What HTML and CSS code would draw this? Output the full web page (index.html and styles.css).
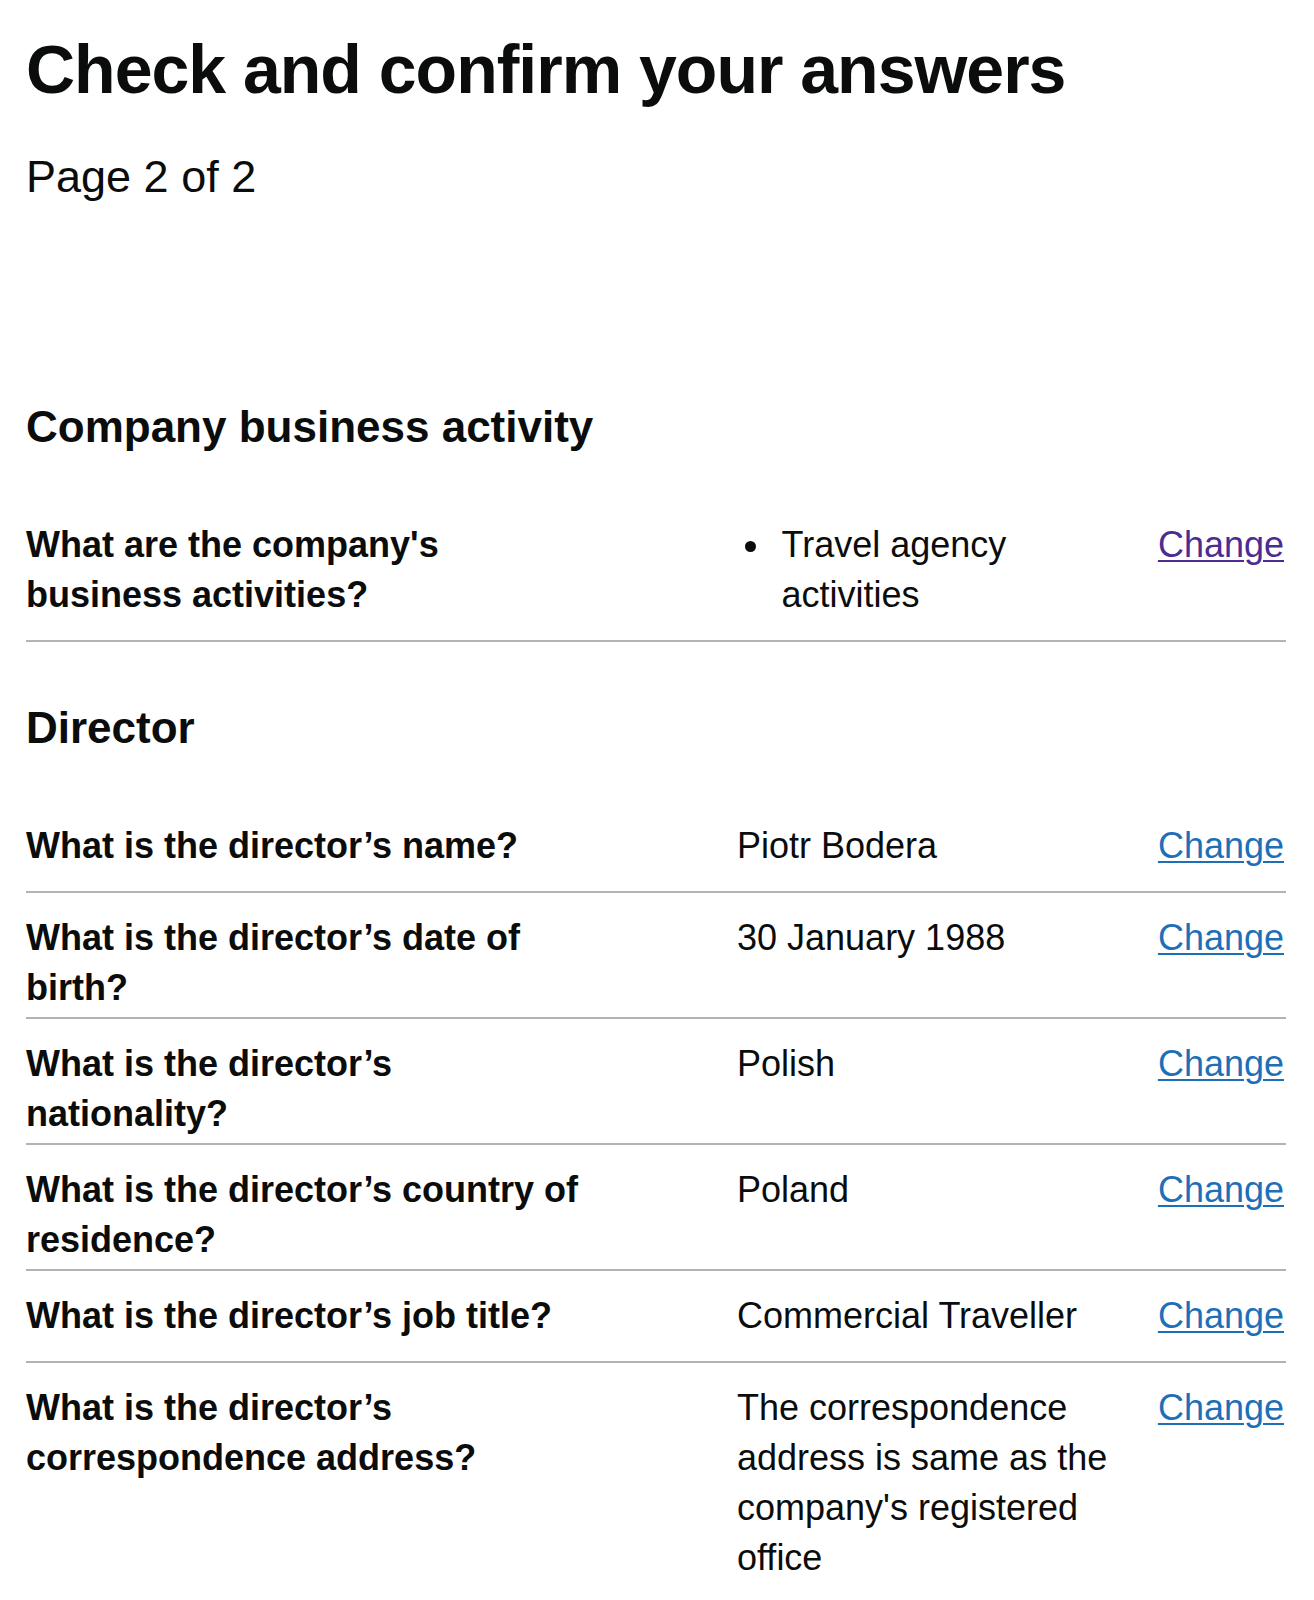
FILE: index.html
```html
<!DOCTYPE html>
<html lang="en">
<head>
<meta charset="utf-8">
<title>Check and confirm your answers</title>
<link rel="stylesheet" href="styles.css">
</head>
<body>
<main class="page">
  <h1 class="title">Check and confirm your answers</h1>
  <p class="caption">Page 2 of 2</p>

  <h2 class="section-heading">Company business activity</h2>
  <dl class="summary">
    <div class="summary-row">
      <dt class="summary-key">What are the company's business activities?</dt>
      <dd class="summary-value">
        <ul class="bullets"><li>Travel agency activities</li></ul>
      </dd>
      <dd class="summary-actions"><a class="link link--visited" href="#">Change</a></dd>
    </div>
  </dl>

  <h2 class="section-heading">Director</h2>
  <dl class="summary">
    <div class="summary-row">
      <dt class="summary-key">What is the director’s name?</dt>
      <dd class="summary-value">Piotr Bodera</dd>
      <dd class="summary-actions"><a class="link" href="#">Change</a></dd>
    </div>
    <div class="summary-row">
      <dt class="summary-key">What is the director’s date of birth?</dt>
      <dd class="summary-value">30 January 1988</dd>
      <dd class="summary-actions"><a class="link" href="#">Change</a></dd>
    </div>
    <div class="summary-row">
      <dt class="summary-key">What is the director’s nationality?</dt>
      <dd class="summary-value">Polish</dd>
      <dd class="summary-actions"><a class="link" href="#">Change</a></dd>
    </div>
    <div class="summary-row">
      <dt class="summary-key">What is the director’s country of residence?</dt>
      <dd class="summary-value">Poland</dd>
      <dd class="summary-actions"><a class="link" href="#">Change</a></dd>
    </div>
    <div class="summary-row">
      <dt class="summary-key">What is the director’s job title?</dt>
      <dd class="summary-value">Commercial Traveller</dd>
      <dd class="summary-actions"><a class="link" href="#">Change</a></dd>
    </div>
    <div class="summary-row">
      <dt class="summary-key">What is the director’s correspondence address?</dt>
      <dd class="summary-value">The correspondence address is same as the company's registered office</dd>
      <dd class="summary-actions"><a class="link" href="#">Change</a></dd>
    </div>
  </dl>
</main>
</body>
</html>
```

FILE: styles.css
```css
* {
  box-sizing: border-box;
}

body {
  margin: 0;
  background: #ffffff;
  color: #0b0c0c;
  font-family: "Liberation Sans", Arial, sans-serif;
}

.page {
  padding: 0 28px 0 26px;
}

.title {
  margin: 29px 0 38px;
  font-size: 68px;
  line-height: 80px;
  font-weight: 700;
  letter-spacing: -1px;
}

.caption {
  margin: 0 0 195px;
  font-size: 45px;
  line-height: 60px;
}

.section-heading {
  margin: 0 0 48px;
  font-size: 44px;
  line-height: 50px;
  font-weight: 700;
}

.summary {
  margin: 0 0 61px;
}

.summary-row {
  display: grid;
  grid-template-columns: 711px 393px 1fr;
  border-bottom: 2px solid #b1b4b6;
  font-size: 36px;
  line-height: 50px;
}

.summary-key {
  margin: 0;
  padding: 20px 146px 4px 0;
  font-weight: 700;
}

.summary-value {
  margin: 0;
  padding: 20px 0;
}

.summary-actions {
  margin: 0;
  padding: 20px 2px 20px 0;
  text-align: right;
}

.bullets {
  margin: 0;
  padding: 0;
  list-style: none;
}

.bullets li {
  display: flex;
}

.bullets li::before {
  content: "";
  flex: none;
  width: 11px;
  height: 11px;
  border-radius: 50%;
  background: #0b0c0c;
  margin: 21px 26px 0 7.5px;
}

.link {
  color: #1d70b8;
  text-decoration: underline;
  text-decoration-thickness: 2px;
  text-underline-offset: 3px;
}

.link--visited {
  color: #4c2c92;
}
```
